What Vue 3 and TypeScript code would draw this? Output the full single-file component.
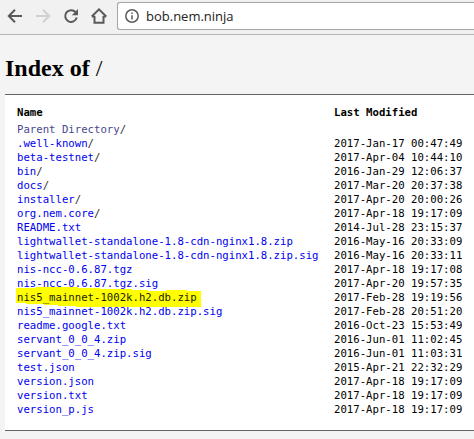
<script setup lang="ts">
interface Entry {
  name: string
  dir?: boolean
  visited?: boolean
  marked?: boolean
  modified: string
}

const entries: Entry[] = [
  { name: 'Parent Directory', dir: true, visited: true, modified: '' },
  { name: '.well-known', dir: true, modified: '2017-Jan-17 00:47:49' },
  { name: 'beta-testnet', dir: true, modified: '2017-Apr-04 10:44:10' },
  { name: 'bin', dir: true, modified: '2016-Jan-29 12:06:37' },
  { name: 'docs', dir: true, modified: '2017-Mar-20 20:37:38' },
  { name: 'installer', dir: true, modified: '2017-Apr-20 20:00:26' },
  { name: 'org.nem.core', dir: true, modified: '2017-Apr-18 19:17:09' },
  { name: 'README.txt', modified: '2014-Jul-28 23:15:37' },
  { name: 'lightwallet-standalone-1.8-cdn-nginx1.8.zip', modified: '2016-May-16 20:33:09' },
  { name: 'lightwallet-standalone-1.8-cdn-nginx1.8.zip.sig', modified: '2016-May-16 20:33:11' },
  { name: 'nis-ncc-0.6.87.tgz', modified: '2017-Apr-18 19:17:08' },
  { name: 'nis-ncc-0.6.87.tgz.sig', modified: '2017-Apr-20 19:57:35' },
  { name: 'nis5_mainnet-1002k.h2.db.zip', marked: true, modified: '2017-Feb-28 19:19:56' },
  { name: 'nis5_mainnet-1002k.h2.db.zip.sig', modified: '2017-Feb-28 20:51:20' },
  { name: 'readme.google.txt', modified: '2016-Oct-23 15:53:49' },
  { name: 'servant_0_0_4.zip', modified: '2016-Jun-01 11:02:45' },
  { name: 'servant_0_0_4.zip.sig', modified: '2016-Jun-01 11:03:31' },
  { name: 'test.json', modified: '2015-Apr-21 22:32:29' },
  { name: 'version.json', modified: '2017-Apr-18 19:17:09' },
  { name: 'version.txt', modified: '2017-Apr-18 19:17:09' },
  { name: 'version_p.js', modified: '2017-Apr-18 19:17:09' },
]
</script>

<template>
  <div class="window">
    <header class="toolbar">
      <nav class="buttons">
        <svg class="icon" viewBox="0 0 16 16"><path d="M15 8H2.4M8 1.8L1.8 8l6.2 6.2" /></svg>
        <svg class="icon disabled" viewBox="0 0 16 16"><path d="M1 8h12.6M8 1.8l6.2 6.2L8 14.2" /></svg>
        <svg class="icon" viewBox="0 0 16 16">
          <path d="M12.6 4.2A5.9 5.9 0 1 0 13.8 9.6" />
          <path class="solid" d="M15 1v6.2H8.8z" />
        </svg>
        <svg class="icon" viewBox="0 0 16 16"><path d="M3.5 8v6.8h9V8M.8 8.5L8 1.4l7.2 7.1M.8 8.5h2.7M12.5 8.5h2.7" /></svg>
      </nav>
      <div class="omnibox">
        <svg class="info" viewBox="0 0 14 14">
          <circle cx="7" cy="7" r="6.2" />
          <path d="M7 6.2v4.2M7 3.5v1.6" />
        </svg>
        <span class="url">bob.nem.ninja</span>
      </div>
    </header>
    <h2 class="title">Index of <span class="path">/</span></h2>
    <main class="list">
      <div class="row head"><span>Name</span><span>Last Modified</span></div>
      <div v-for="e in entries" :key="e.name" class="row">
        <span class="name" :class="{ marked: e.marked }">
          <svg v-if="e.marked" class="marker" viewBox="0 0 186 20">
            <path d="M0 1h20v-1h42v1h22v1h32v1h16v1h18v-1h21v1h14v16h-46v1H98v-1H60v-1H42v-1H28v-1H10v-1H0z" />
          </svg>
          <a :class="{ visited: e.visited }">{{ e.name }}</a><i v-if="e.dir">/</i>
        </span>
        <span>{{ e.modified }}</span>
      </div>
    </main>
  </div>
</template>

<style>
body {
  background: #f4f4f4;
}
</style>

<style scoped>
.window {
  height: 439px;
  overflow: hidden;
  background: #f4f4f4;
  color: #000;
}
.toolbar {
  box-sizing: border-box;
  display: flex;
  height: 35px;
  padding-top: 2px;
  background: #f1f1f1;
  border-bottom: 1px solid #b4b4b4;
}
.buttons {
  display: flex;
  flex: none;
  width: 110px;
  gap: 12px;
  padding: 6px 0 0 7px;
  box-sizing: border-box;
}
.icon {
  flex: none;
  width: 16px;
  height: 16px;
  fill: none;
  stroke: #5a5a5a;
  stroke-width: 2;
}
.icon.disabled {
  stroke: #d0d0d0;
}
.icon .solid {
  fill: #5a5a5a;
  stroke: none;
}
.omnibox {
  box-sizing: border-box;
  display: flex;
  flex: 1;
  align-items: center;
  height: 28px;
  margin-left: 7px;
  padding-left: 7px;
  background: #fff;
  border: 1px solid #a6a6a6;
  border-right: 0;
  border-radius: 3px 0 0 3px;
}
.info {
  width: 14px;
  height: 14px;
  fill: none;
  stroke: #5a5a5a;
  stroke-width: 1.5;
}
.url {
  margin-left: 7px;
  color: #222;
  font: 13px/20px "Open Sans", sans-serif;
  white-space: nowrap;
}
.title {
  margin: 19px 0 12px 5px;
  font: bold 24px/28px "Liberation Serif", serif;
}
.path {
  font-weight: normal;
}
.list {
  box-sizing: border-box;
  height: 337px;
  margin-left: 5px;
  padding: 11px 0 0 12px;
  background: #fff;
  border: solid #646464;
  border-width: 1px 0;
  font: 10.66px/14px "DejaVu Sans Mono", monospace;
}
.row {
  display: grid;
  grid-template-columns: 317px 1fr;
  height: 14px;
  white-space: nowrap;
}
.head {
  margin-bottom: 3px;
  font-weight: bold;
}
.name {
  position: relative;
  justify-self: start;
}
.name a {
  position: relative;
  color: #0000ee;
}
.name a.visited {
  color: #48478f;
}
.name i {
  font-style: normal;
  color: #333;
}
.name.marked a {
  color: #1c1c00;
}
.marker {
  position: absolute;
  left: -1px;
  top: -4px;
  width: 186px;
  height: 20px;
  fill: #ff0;
}
</style>
